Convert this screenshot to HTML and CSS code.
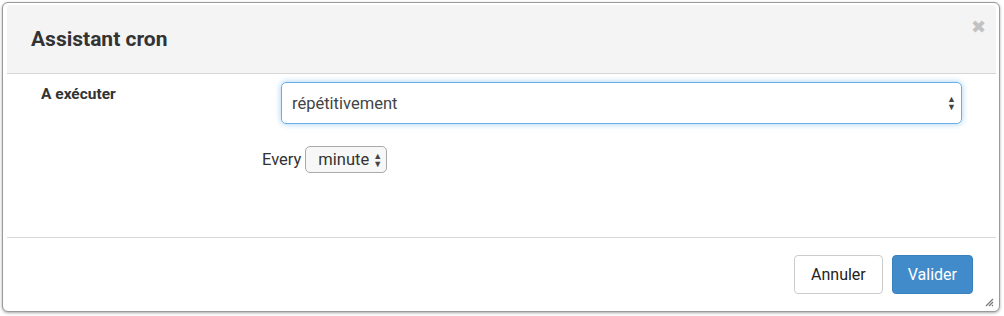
FILE: index.html
```html
<!DOCTYPE html>
<html>
<head>
    <link rel="stylesheet" href="styles.css">
    <title>Assistant cron</title>
</head>
<body>
    <div class="dialog">
        <div class="dialog-header">
            <h1 class="dialog-title">Assistant cron</h1>
            <span class="dialog-close">&#10006;</span>
        </div>
        <div class="dialog-content">
            <div class="form-row">
                <label class="form-label">A exécuter</label>
                <div class="select-box select-focus">
                    <span>répétitivement</span>
                    <span class="arrows">&#9650;<br>&#9660;</span>
                </div>
            </div>
            <div class="every-row">
                <span>Every</span>
                <div class="select-small">
                    <span>minute</span>
                    <span class="arrows">&#9650;<br>&#9660;</span>
                </div>
            </div>
        </div>
        <div class="dialog-footer">
            <button class="btn btn-default">Annuler</button>
            <button class="btn btn-primary">Valider</button>
            <svg class="resize" width="9" height="9" viewBox="0 0 9 9">
                <path d="M8 1 L1 8 M8 4 L4 8 M8 7 L7 8" stroke="#777" stroke-width="1.2"/>
            </svg>
        </div>
    </div>
</body>
</html>
```
FILE: styles.css
```css
body {
    margin: 0;
    padding: 2px 4px 4px 2px;
    background-color: #ffffff;
    font-family: Roboto, "Liberation Sans", sans-serif;
    color: #333;
}
.dialog {
    position: relative;
    border: 1px solid #9a9a9a;
    border-radius: 6px;
    background-color: white;
    padding: 2px 3px 3px 4px;
    box-shadow: 0 1px 3px rgba(0, 0, 0, 0.35);
    height: 310px;
    box-sizing: border-box;
}
.dialog-header {
    position: relative;
    background-color: #f4f4f4;
    height: 68px;
    border-bottom: 1px solid #d6d6d6;
    border-radius: 4px 4px 0 0;
    display: flex;
    align-items: center;
}
.dialog-title {
    margin: 0 0 0 24px;
    font-size: 21px;
    font-weight: bold;
    color: #333;
}
.dialog-close {
    position: absolute;
    top: 11px;
    right: 10px;
    font-size: 18px;
    color: #c2c2c2;
}
.dialog-content {
    height: 164px;
    border-bottom: 1px solid #d9d9d9;
    box-sizing: border-box;
}
.form-row {
    display: flex;
    align-items: flex-start;
    padding: 8px 34px 0 34px;
}
.form-label {
    width: 240px;
    font-size: 15.5px;
    font-weight: bold;
    padding-top: 3px;
}
.select-box {
    flex: 1;
    height: 42px;
    box-sizing: border-box;
    border: 1px solid #66afe9;
    border-radius: 5px;
    display: flex;
    align-items: center;
    justify-content: space-between;
    padding: 0 5px 0 10px;
    font-size: 16.5px;
    color: #444;
}
.select-focus {
    box-shadow: 0 0 6px rgba(102, 175, 233, 0.6);
}
.arrows {
    font-size: 9px;
    line-height: 8px;
    color: #444;
    text-align: center;
}
.every-row {
    display: flex;
    align-items: center;
    gap: 4px;
    padding: 22px 0 0 255px;
    font-size: 16.5px;
    color: #333;
}
.select-small {
    display: flex;
    align-items: center;
    gap: 4px;
    height: 27px;
    box-sizing: border-box;
    border: 1px solid #a9a9a9;
    border-radius: 5px;
    background-color: #f7f7f7;
    padding: 0 4px 0 12px;
    font-size: 16.5px;
}
.dialog-footer {
    position: relative;
    display: flex;
    justify-content: flex-end;
    align-items: center;
    gap: 9px;
    height: 72px;
    padding-right: 23px;
}
.btn {
    height: 39px;
    padding: 0 16px;
    border-radius: 4px;
    font-family: Roboto, "Liberation Sans", sans-serif;
    font-size: 16px;
}
.btn-default {
    background-color: white;
    border: 1px solid #ccc;
    color: #222;
}
.btn-primary {
    background-color: #428bca;
    border: 1px solid #3a80bd;
    color: white;
    padding: 0 15px;
}
.resize {
    position: absolute;
    right: 2px;
    bottom: 3px;
}
```
